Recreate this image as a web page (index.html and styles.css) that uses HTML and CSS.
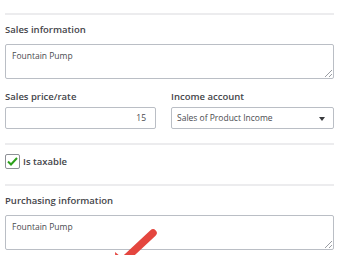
FILE: index.html
```html
<!DOCTYPE html>
<html>
<head>
	<meta charset="UTF-8">
	<title>Product details</title>
	<link rel="stylesheet" href="styles.css">
</head>
<body>
	<main class="form">
		<hr class="divider">
		<section class="group">
			<p class="label">Sales information</p>
			<div class="textarea">Fountain Pump<span class="grip"></span></div>
		</section>

		<div class="row">
			<div class="field price">
				<p class="label">Sales price/rate</p>
				<div class="input number">15</div>
			</div>
			<div class="field account">
				<p class="label">Income account</p>
				<div class="input select">Sales of Product Income<span class="caret"></span></div>
			</div>
		</div>

		<hr class="divider">
		<label class="check">
			<span class="box">
				<svg width="11" height="9" viewBox="0 0 11 9"><path d="M1 4.5 L4 7.5 L10 1" fill="none" stroke="#2ca01c" stroke-width="2"/></svg>
			</span>
			Is taxable
		</label>

		<hr class="divider">
		<section class="group">
			<p class="label">Purchasing information</p>
			<div class="textarea">Fountain Pump<span class="grip"></span></div>
		</section>
	</main>

	<svg class="pointer" width="60" height="40" viewBox="0 0 60 40">
		<path d="M39 5 L9 33" stroke="#e4463f" stroke-width="7.5" stroke-linecap="round"/>
		<path d="M2 40 L1 24 L18 38 Z" fill="#e4463f"/>
	</svg>
</body>
</html>
```

FILE: styles.css
```css
body {
	margin: 0;
	background: white;
	font-family: "Open Sans", "Liberation Sans", sans-serif;
	color: #393a3d;
	position: relative;
	overflow: hidden;
	height: 255px;
}

.form {
	padding: 13px 6px 0 5px;
}

.divider {
	border: none;
	border-top: 2px solid #ececee;
	margin: 0;
}

.label {
	margin: 0;
	font-size: 9.5px;
	font-weight: 600;
	line-height: 14px;
	color: #44454a;
}

.group .label {
	margin-top: 8px;
	margin-bottom: 7px;
}

.textarea {
	position: relative;
	height: 35px;
	border: 1px solid #babec5;
	border-radius: 2px;
	padding: 5px 6px;
	box-sizing: border-box;
	font-size: 8.5px;
	line-height: 12px;
	color: #4a4b50;
}

.grip {
	position: absolute;
	right: 1px;
	bottom: 1px;
	width: 7px;
	height: 7px;
	background: linear-gradient(135deg, transparent 45%, #9a9da3 45%, #9a9da3 55%, transparent 55%, transparent 75%, #9a9da3 75%, #9a9da3 85%, transparent 85%);
}

.row {
	display: flex;
	gap: 15px;
	margin-top: 11px;
	margin-bottom: 14px;
}

.price {
	flex: 0 0 151px;
}

.account {
	flex: 1;
}

.field .label {
	margin-bottom: 3px;
}

.input {
	height: 22px;
	box-sizing: border-box;
	border: 1px solid #babec5;
	border-radius: 2px;
	padding: 0 5px;
	font-size: 8.5px;
	line-height: 20px;
	color: #4a4b50;
}

.number {
	text-align: right;
	padding-right: 9px;
}

.select {
	position: relative;
}

.caret {
	position: absolute;
	right: 8px;
	top: 9px;
	border-left: 3px solid transparent;
	border-right: 3px solid transparent;
	border-top: 4px solid #393a3d;
}

.check {
	display: flex;
	align-items: center;
	gap: 3px;
	margin: 9px 0 15px;
	line-height: 15px;
	font-size: 9.5px;
	font-weight: 600;
	color: #44454a;
}

.box {
	width: 13px;
	height: 13px;
	border: 1px solid #8d9096;
	border-radius: 2px;
	display: flex;
	align-items: center;
	justify-content: center;
}

.pointer {
	position: absolute;
	left: 114px;
	top: 228px;
}
```
